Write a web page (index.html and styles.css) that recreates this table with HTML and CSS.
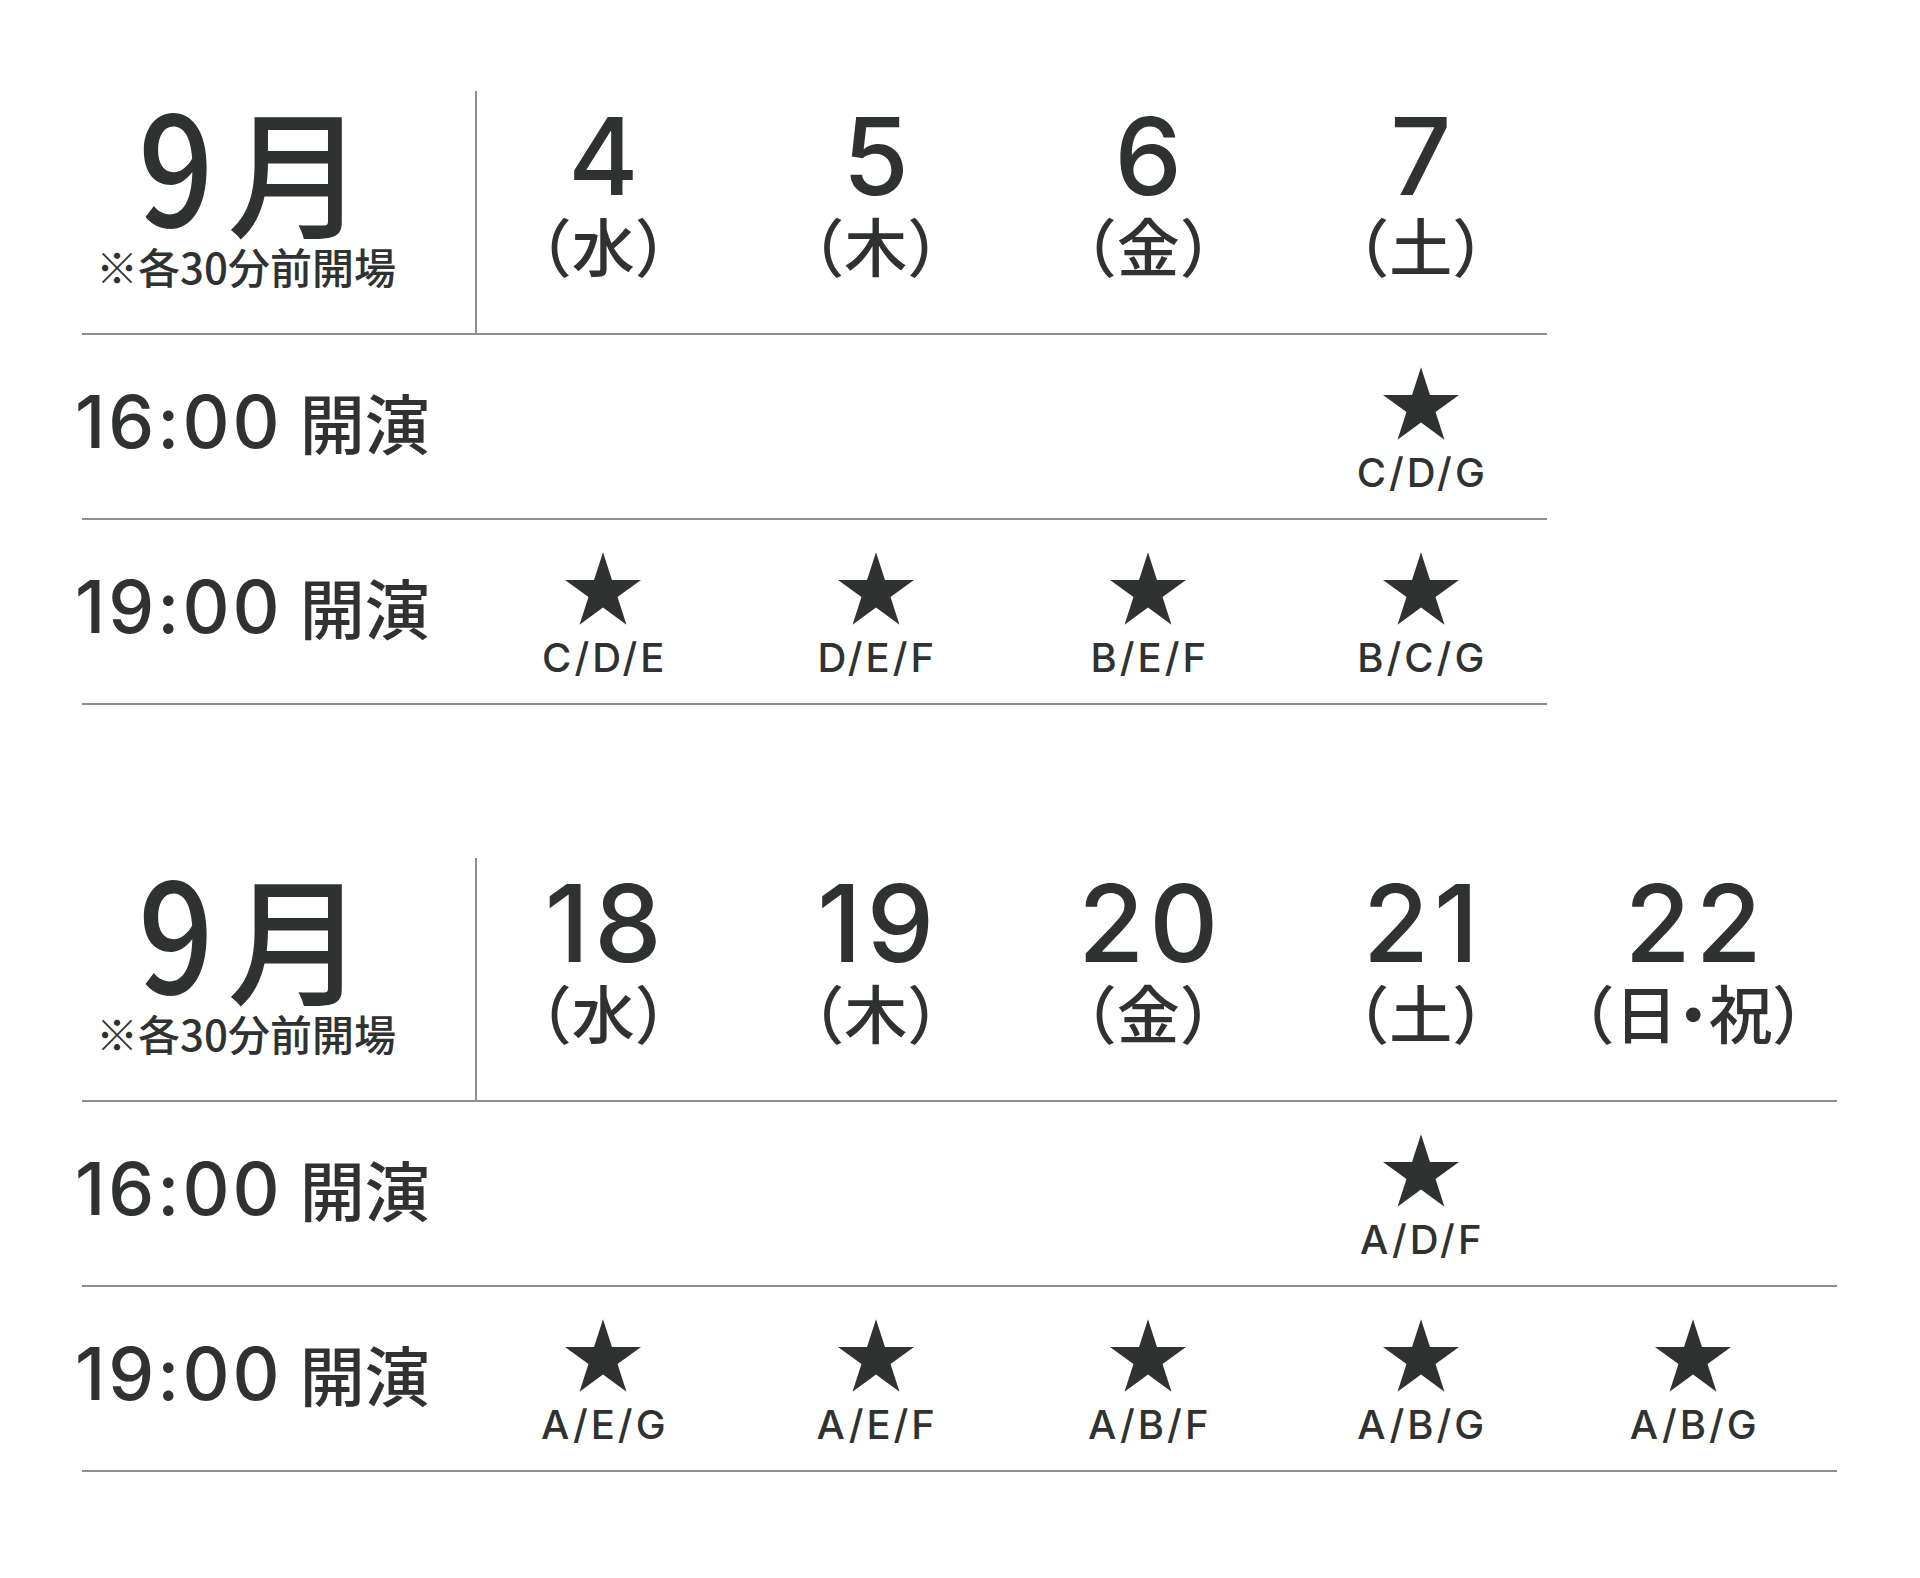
FILE: index.html
```html
<!DOCTYPE html>
<html lang="ja">
<head>
<meta charset="utf-8">
<title>9月 公演スケジュール</title>
<link rel="stylesheet" href="styles.css">
</head>
<body>
<main class="page">
  <section class="sched sched--4">
    <div class="row row--head">
      <div class="cell cell--month">
        <div class="month"><span class="month-num">9</span><span class="month-kanji">月</span></div>
        <div class="note">※各30分前開場</div>
      </div>
      <div class="cell cell--date"><span class="day">4</span><span class="dow">（水）</span></div>
      <div class="cell cell--date"><span class="day">5</span><span class="dow">（木）</span></div>
      <div class="cell cell--date"><span class="day">6</span><span class="dow">（金）</span></div>
      <div class="cell cell--date"><span class="day">7</span><span class="dow">（土）</span></div>
    </div>
    <div class="row">
      <div class="cell cell--time"><span class="time">16:00</span><span class="kaien">開演</span></div>
      <div class="cell"></div>
      <div class="cell"></div>
      <div class="cell"></div>
      <div class="cell cell--show">
        <svg class="star" viewBox="2.45 0 95.1 90.45"><polygon points="50,0 61.23,34.55 97.55,34.55 68.17,55.9 79.39,90.45 50,69.1 20.61,90.45 31.83,55.9 2.45,34.55 38.77,34.55"/></svg>
        <span class="cast">C/D/G</span>
      </div>
    </div>
    <div class="row">
      <div class="cell cell--time"><span class="time">19:00</span><span class="kaien">開演</span></div>
      <div class="cell cell--show">
        <svg class="star" viewBox="2.45 0 95.1 90.45"><polygon points="50,0 61.23,34.55 97.55,34.55 68.17,55.9 79.39,90.45 50,69.1 20.61,90.45 31.83,55.9 2.45,34.55 38.77,34.55"/></svg>
        <span class="cast">C/D/E</span>
      </div>
      <div class="cell cell--show">
        <svg class="star" viewBox="2.45 0 95.1 90.45"><polygon points="50,0 61.23,34.55 97.55,34.55 68.17,55.9 79.39,90.45 50,69.1 20.61,90.45 31.83,55.9 2.45,34.55 38.77,34.55"/></svg>
        <span class="cast">D/E/F</span>
      </div>
      <div class="cell cell--show">
        <svg class="star" viewBox="2.45 0 95.1 90.45"><polygon points="50,0 61.23,34.55 97.55,34.55 68.17,55.9 79.39,90.45 50,69.1 20.61,90.45 31.83,55.9 2.45,34.55 38.77,34.55"/></svg>
        <span class="cast">B/E/F</span>
      </div>
      <div class="cell cell--show">
        <svg class="star" viewBox="2.45 0 95.1 90.45"><polygon points="50,0 61.23,34.55 97.55,34.55 68.17,55.9 79.39,90.45 50,69.1 20.61,90.45 31.83,55.9 2.45,34.55 38.77,34.55"/></svg>
        <span class="cast">B/C/G</span>
      </div>
    </div>
  </section>

  <section class="sched sched--5">
    <div class="row row--head">
      <div class="cell cell--month">
        <div class="month"><span class="month-num">9</span><span class="month-kanji">月</span></div>
        <div class="note">※各30分前開場</div>
      </div>
      <div class="cell cell--date"><span class="day">18</span><span class="dow">（水）</span></div>
      <div class="cell cell--date"><span class="day">19</span><span class="dow">（木）</span></div>
      <div class="cell cell--date"><span class="day">20</span><span class="dow">（金）</span></div>
      <div class="cell cell--date"><span class="day">21</span><span class="dow">（土）</span></div>
      <div class="cell cell--date"><span class="day">22</span><span class="dow">（日<span class="dot">・</span>祝）</span></div>
    </div>
    <div class="row">
      <div class="cell cell--time"><span class="time">16:00</span><span class="kaien">開演</span></div>
      <div class="cell"></div>
      <div class="cell"></div>
      <div class="cell"></div>
      <div class="cell cell--show">
        <svg class="star" viewBox="2.45 0 95.1 90.45"><polygon points="50,0 61.23,34.55 97.55,34.55 68.17,55.9 79.39,90.45 50,69.1 20.61,90.45 31.83,55.9 2.45,34.55 38.77,34.55"/></svg>
        <span class="cast">A/D/F</span>
      </div>
      <div class="cell"></div>
    </div>
    <div class="row">
      <div class="cell cell--time"><span class="time">19:00</span><span class="kaien">開演</span></div>
      <div class="cell cell--show">
        <svg class="star" viewBox="2.45 0 95.1 90.45"><polygon points="50,0 61.23,34.55 97.55,34.55 68.17,55.9 79.39,90.45 50,69.1 20.61,90.45 31.83,55.9 2.45,34.55 38.77,34.55"/></svg>
        <span class="cast">A/E/G</span>
      </div>
      <div class="cell cell--show">
        <svg class="star" viewBox="2.45 0 95.1 90.45"><polygon points="50,0 61.23,34.55 97.55,34.55 68.17,55.9 79.39,90.45 50,69.1 20.61,90.45 31.83,55.9 2.45,34.55 38.77,34.55"/></svg>
        <span class="cast">A/E/F</span>
      </div>
      <div class="cell cell--show">
        <svg class="star" viewBox="2.45 0 95.1 90.45"><polygon points="50,0 61.23,34.55 97.55,34.55 68.17,55.9 79.39,90.45 50,69.1 20.61,90.45 31.83,55.9 2.45,34.55 38.77,34.55"/></svg>
        <span class="cast">A/B/F</span>
      </div>
      <div class="cell cell--show">
        <svg class="star" viewBox="2.45 0 95.1 90.45"><polygon points="50,0 61.23,34.55 97.55,34.55 68.17,55.9 79.39,90.45 50,69.1 20.61,90.45 31.83,55.9 2.45,34.55 38.77,34.55"/></svg>
        <span class="cast">A/B/G</span>
      </div>
      <div class="cell cell--show">
        <svg class="star" viewBox="2.45 0 95.1 90.45"><polygon points="50,0 61.23,34.55 97.55,34.55 68.17,55.9 79.39,90.45 50,69.1 20.61,90.45 31.83,55.9 2.45,34.55 38.77,34.55"/></svg>
        <span class="cast">A/B/G</span>
      </div>
    </div>
  </section>
</main>
</body>
</html>
```
FILE: styles.css
```css
html, body {
  margin: 0;
  padding: 0;
  background: #ffffff;
}

body {
  color: #2f3231;
  font-family: Inter, "Noto Sans CJK JP", sans-serif;
  width: 1920px;
  min-height: 1578px;
}

.page {
  padding: 91px 0 0 82px;
  display: flex;
  flex-direction: column;
  gap: 153px;
}

.row {
  display: grid;
  border-bottom: 2px solid #8e8e8e;
  height: 183px;
}

.row--head {
  height: 242px;
}

.sched--4 .row {
  width: 1465px;
  grid-template-columns: 385px repeat(4, 272.5px);
}

.sched--5 .row {
  width: 1755px;
  grid-template-columns: 385px repeat(5, 272.5px);
}

.cell {
  min-width: 0;
}

/* month label */
.cell--month {
  margin-right: -10px;
  border-right: 2px solid #8e8e8e;
  padding-right: 65px;
  display: flex;
  flex-direction: column;
  align-items: center;
}

.month {
  display: flex;
  align-items: baseline;
  margin-top: -6px;
  font-family: "Noto Sans CJK JP", sans-serif;
  font-weight: 500;
}

.month-num {
  display: inline-block;
  font-size: 152px;
  line-height: 1;
  transform: scaleX(0.87);
  transform-origin: 100% 50%;
}

.month-kanji {
  margin-left: 14px;
  font-size: 138px;
  line-height: 1;
}

.note {
  margin-top: 8px;
  font-family: "Noto Sans CJK JP", sans-serif;
  font-weight: 500;
  font-size: 42px;
  line-height: 1;
  white-space: nowrap;
}

/* date headers */
.cell--date {
  display: flex;
  flex-direction: column;
  align-items: center;
  padding-top: 12px;
  white-space: nowrap;
}

.day {
  font-family: Inter, sans-serif;
  font-weight: 500;
  font-size: 107px;
  line-height: 1;
  letter-spacing: 5px;
  margin-right: -5px;
}

.dow {
  margin-top: 2px;
  font-family: "Noto Sans CJK JP", sans-serif;
  font-weight: 500;
  font-size: 63px;
  line-height: 1;
}

.dot {
  font-feature-settings: "halt";
}

/* time labels */
.cell--time {
  display: flex;
  align-items: center;
  padding-bottom: 10px;
  margin-left: -7px;
  white-space: nowrap;
}

.time {
  font-family: Inter, sans-serif;
  font-weight: 500;
  font-size: 73px;
  line-height: 1;
  letter-spacing: 3px;
}

.kaien {
  margin-left: 17px;
  font-family: "Noto Sans CJK JP", sans-serif;
  font-weight: 500;
  font-size: 65px;
  line-height: 1;
}

/* performances */
.cell--show {
  display: flex;
  flex-direction: column;
  align-items: center;
  padding-top: 32px;
}

.star {
  display: block;
  width: 76px;
  height: 73px;
  fill: #2f3231;
}

.cast {
  margin-top: 13px;
  margin-right: -3px;
  font-family: Inter, sans-serif;
  font-weight: 500;
  font-size: 40px;
  line-height: 40px;
  letter-spacing: 3px;
}
```
